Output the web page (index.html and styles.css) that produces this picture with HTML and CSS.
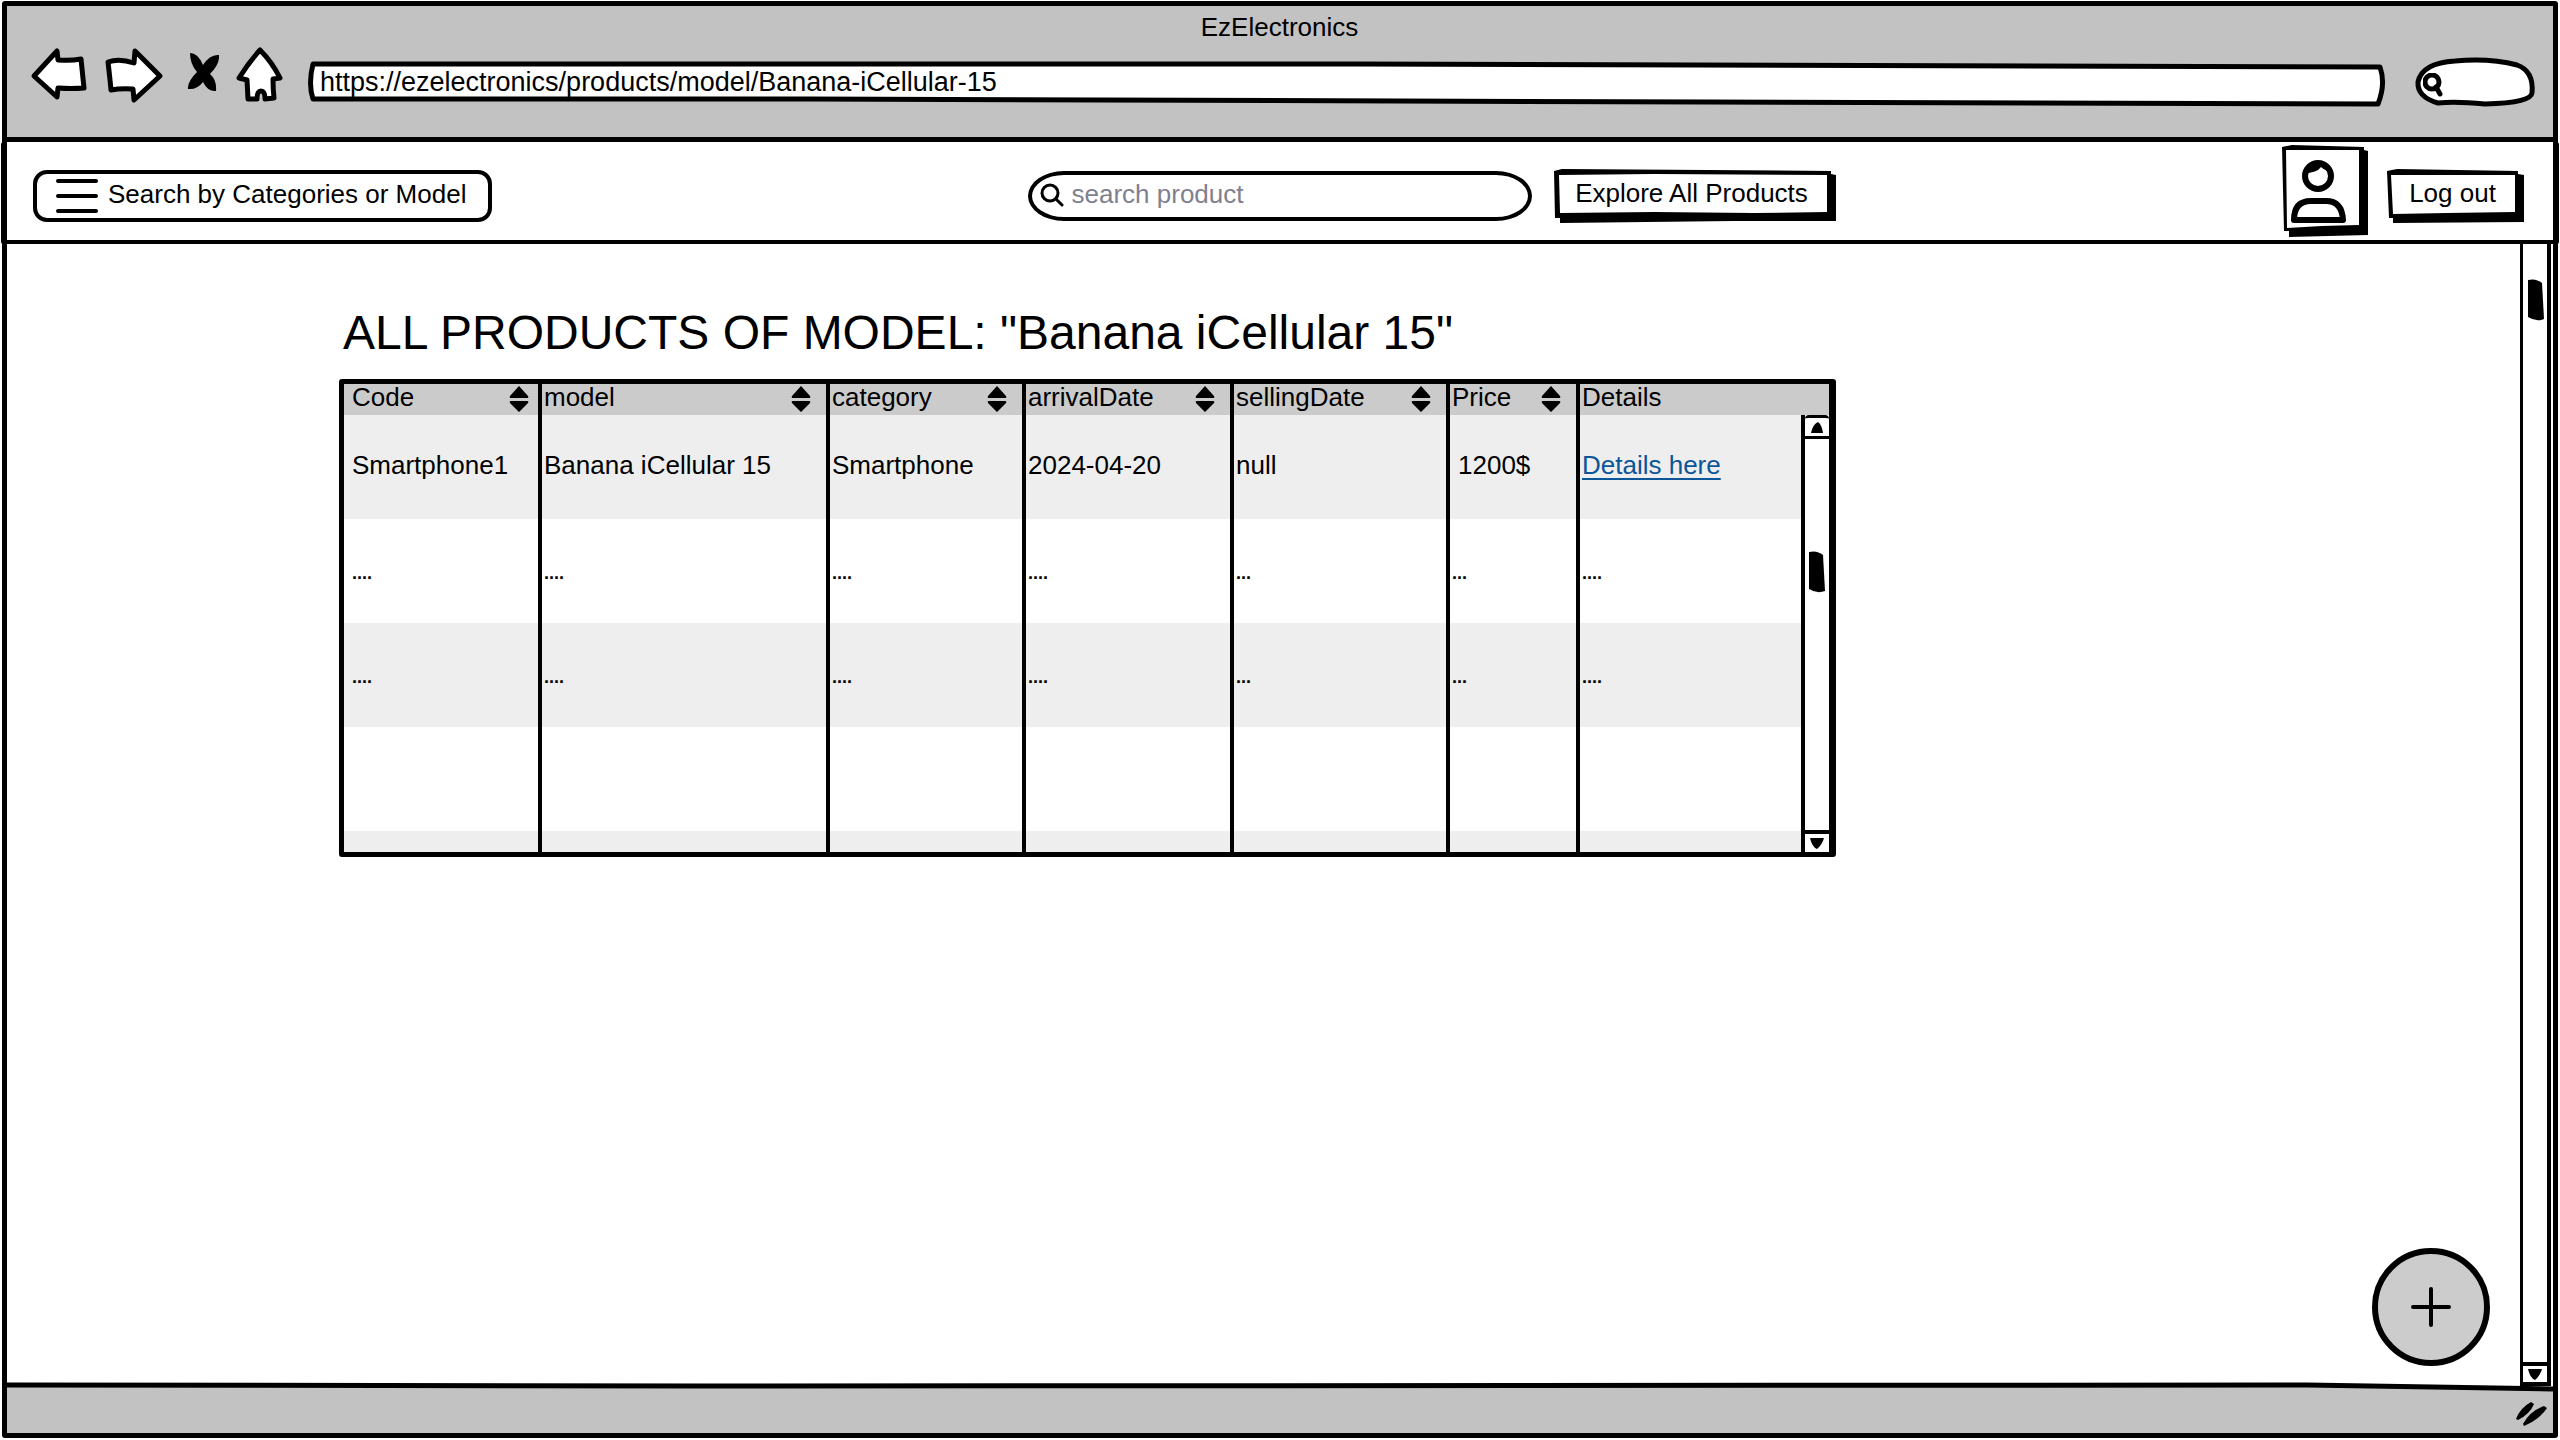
FILE: index.html
```html
<!DOCTYPE html>
<html lang="en">
<head>
<meta charset="utf-8">
<title>EzElectronics</title>
<link rel="stylesheet" href="styles.css">
</head>
<body>
<svg class="defs" aria-hidden="true">
  <symbol id="sort" viewBox="0 0 20 26">
    <path d="M10 0 19 10Q20 12 18 12H2Q0 12 1 10ZM10 26 19 17Q20 15 18 15H2Q0 15 1 17Z"/>
  </symbol>
  <symbol id="down" viewBox="0 0 14 11"><path d="M0 0H14Q12 7 7 11Q2 9 0 0Z"/></symbol>
  <symbol id="up" viewBox="0 0 14 11"><path d="M1 11Q3 2 8 0Q12 3 13 11Z"/></symbol>
  <symbol id="thumb" viewBox="0 0 16 42"><path d="M0 1Q8-1 14 4L16 40Q8 43 0 38Z"/></symbol>
</svg>

<div class="window">
  <header class="chrome">
    <div class="chrome-title">EzElectronics</div>
    <div class="toolbar">
      <button class="tool" aria-label="Back">
        <svg width="60" height="60" viewBox="0 0 60 60"><path class="outline" d="M5 29 28 4 29 13Q42 14 52 12L55 41Q42 42 29 41L28 50Z"/></svg>
      </button>
      <button class="tool" aria-label="Forward">
        <svg width="60" height="60" viewBox="0 0 60 60"><path class="outline" d="M4 15Q15 11 30 16L31 4 56 29 30 53 29 42Q17 41 7 43Q6 32 4 15Z"/></svg>
      </button>
      <button class="tool" aria-label="Stop">
        <svg width="40" height="60" viewBox="0 0 40 60"><path d="M11 6Q19 6 24 18Q31 7 40 8Q41 17 31 27Q38 33 37 44Q29 45 24 35Q18 43 9 42Q8 35 18 25Q11 17 11 6Z"/></svg>
      </button>
      <button class="tool" aria-label="Home">
        <svg width="59" height="60" viewBox="0 0 59 60"><path class="outline" d="M26 3Q38 15 46 31L39 32Q39 42 40 51L31 52Q31 44 27 44Q23 44 23 52L14 52 13 33 5 31Q15 15 26 3Z"/></svg>
      </button>
      <div class="address">
        <svg class="sketch" viewBox="0 0 2077 40" preserveAspectRatio="none" aria-hidden="true"><path d="M5 2 1050 2 2072 5Q2078 22 2070 42L1400 40 500 37 5 37Q0 22 5 2Z"/></svg>
        <input class="field" aria-label="Address" value="https://ezelectronics/products/model/Banana-iCellular-15">
      </div>
      <div class="mini-search">
        <svg class="sketch" viewBox="0 0 119 50" preserveAspectRatio="none" aria-hidden="true"><path d="M23 46Q2 40 3 25Q7 6 40 4Q75 1 102 8Q119 14 117 36Q116 46 70 47Q40 44 23 46Z"/></svg>
        <svg class="mini-lens" viewBox="0 0 20 24" aria-hidden="true"><circle cx="9" cy="9" r="7"/><path d="M13 14 17 21"/></svg>
        <input class="field" aria-label="Web search">
      </div>
    </div>
  </header>

  <nav class="navbar">
    <div class="nav-start">
      <button class="categories">
        <svg width="42" height="34" viewBox="0 0 42 34" aria-hidden="true"><path class="line" d="M2 2H40M2 17H40M2 32H40"/></svg>
        Search by Categories or Model
      </button>
    </div>
    <div class="nav-middle">
      <div class="product-search">
        <svg class="lens" viewBox="0 0 24 24" aria-hidden="true"><circle cx="10" cy="10" r="8"/><path d="M16 16 22 22"/></svg>
        <input type="search" aria-label="Search product" placeholder="search product">
      </div>
      <button class="raised explore">
        <svg class="sketch" viewBox="0 0 282 54" preserveAspectRatio="none" aria-hidden="true"><path class="ink" d="M0 2 8 0 277 2V5L282 6V52L180 52 6 54V49H1Z"/><path class="paper" d="M5 6 100 5 273 6V43L200 44 100 43 6 44Z"/></svg>
        <span>Explore All Products</span>
      </button>
    </div>
    <div class="nav-end">
      <button class="avatar" aria-label="Account">
        <svg width="86" height="92" viewBox="0 0 86 92"><path class="ink" d="M0 2 10 0 82 2V5L86 6V90L7 92V86H2Z"/><path class="paper" d="M4 5 77 5V80L40 81 5 83Z"/><circle cx="36" cy="31" r="13" fill="none" stroke="#000" stroke-width="6"/><path class="ink" d="M22 28Q24 16 36 16Q48 17 49 27Q42 25 39 22Q35 28 22 28Z"/><path d="M12 75Q12 56 29 56H44Q60 56 61 75Z" fill="none" stroke="#000" stroke-width="6" stroke-linejoin="round"/></svg>
      </button>
      <button class="raised logout">
        <svg class="sketch" viewBox="0 0 137 54" preserveAspectRatio="none" aria-hidden="true"><path class="ink" d="M0 2 10 0 131 2V5L137 6V53L6 54V49H2Z"/><path class="paper" d="M4 6 128 6V43L60 44 6 45Z"/></svg>
        <span>Log out</span>
      </button>
    </div>
  </nav>

  <main class="page">
    <section class="content">
      <h1>ALL PRODUCTS OF MODEL: "Banana iCellular 15"</h1>
      <div class="grid">
        <table>
          <colgroup><col class="c-code"><col class="c-model"><col class="c-category"><col class="c-arrival"><col class="c-selling"><col class="c-price"><col></colgroup>
          <thead>
            <tr>
              <th scope="col"><button class="sort">Code<svg><use href="#sort"/></svg></button></th>
              <th scope="col"><button class="sort">model<svg><use href="#sort"/></svg></button></th>
              <th scope="col"><button class="sort">category<svg><use href="#sort"/></svg></button></th>
              <th scope="col"><button class="sort">arrivalDate<svg><use href="#sort"/></svg></button></th>
              <th scope="col"><button class="sort">sellingDate<svg><use href="#sort"/></svg></button></th>
              <th scope="col"><button class="sort">Price<svg><use href="#sort"/></svg></button></th>
              <th scope="col">Details</th>
            </tr>
          </thead>
          <tbody>
            <tr><td>Smartphone1</td><td>Banana iCellular 15</td><td>Smartphone</td><td>2024-04-20</td><td>null</td><td class="amount">1200$</td><td><a href="#details">Details here</a></td></tr>
            <tr class="more"><td>....</td><td>....</td><td>....</td><td>....</td><td>...</td><td>...</td><td>....</td></tr>
            <tr class="more"><td>....</td><td>....</td><td>....</td><td>....</td><td>...</td><td>...</td><td>....</td></tr>
            <tr><td></td><td></td><td></td><td></td><td></td><td></td><td></td></tr>
            <tr class="partial"><td></td><td></td><td></td><td></td><td></td><td></td><td></td></tr>
          </tbody>
        </table>
        <div class="grid-scroll">
          <button class="step step-up" aria-label="Scroll up"><svg><use href="#up"/></svg></button>
          <svg class="thumb"><use href="#thumb"/></svg>
          <button class="step step-down" aria-label="Scroll down"><svg><use href="#down"/></svg></button>
        </div>
      </div>
    </section>
    <div class="page-scroll">
      <svg class="thumb"><use href="#thumb"/></svg>
      <button class="step step-down" aria-label="Scroll page down"><svg><use href="#down"/></svg></button>
    </div>
    <button class="fab" aria-label="Add product">
      <svg width="40" height="40" viewBox="0 0 40 40"><path class="line" d="M20 2V38M2 20H38"/></svg>
    </button>
  </main>

  <footer class="statusbar">
    <svg class="edge" viewBox="0 0 2546 12" preserveAspectRatio="none" aria-hidden="true"><path class="paper" d="M0 0H2546V6L2300 2 0 2Z"/><path class="rule" d="M0 2 700 3 2300 2 2546 6"/></svg>
    <svg class="grip" viewBox="0 0 32 26" aria-hidden="true"><path d="M0 18Q4 7 15 1L18 3Q14 13 2 19ZM7 23Q14 10 28 5L31 7Q24 18 8 25Z"/></svg>
  </footer>
</div>
</body>
</html>
```
FILE: styles.css
```css
*, *::before, *::after { box-sizing: border-box; }

body {
  margin: 0;
  background: #fff;
  color: #000;
  font: 26px/30px "Liberation Sans", Arial, sans-serif;
}

button, input {
  margin: 0;
  padding: 0;
  border: 0;
  background: none;
  color: inherit;
  font: inherit;
}

button { cursor: pointer; }
svg { display: block; }
.defs { position: absolute; width: 0; height: 0; }

.ink { fill: #000; }
.paper { fill: #fff; }
.line { fill: none; stroke: #000; stroke-width: 4; stroke-linecap: round; }
.outline { fill: #fff; stroke: #000; stroke-width: 5; stroke-linejoin: round; }

/* Hand-drawn frame that stretches behind a control */
.sketch {
  position: absolute;
  inset: 0;
  width: 100%;
  height: 100%;
  overflow: visible;
}

.window {
  display: flex;
  flex-direction: column;
  min-height: calc(100vh - 3px);
  margin: 1px 2px 2px;
  border: 5px solid #000;
  border-radius: 3px;
}

/* Browser chrome */
.chrome {
  padding: 6px 19px 30px 22px;
  background: #c2c2c2;
  border-bottom: 5px solid #000;
}
.chrome-title { margin-bottom: 4px; padding-right: 4px; text-align: center; }
.toolbar { display: flex; gap: 15px; }
.tool { flex: none; }
.address {
  position: relative;
  flex: 1;
  align-self: flex-end;
  height: 40px;
  margin-bottom: 5px;
}
.address .sketch path,
.mini-search .sketch path {
  fill: #fff;
  stroke: #000;
  stroke-width: 5;
  stroke-linejoin: round;
}
.field {
  position: relative;
  width: 100%;
  height: 100%;
  padding: 0 12px;
  outline: 0;
  font-size: 27px;
}
.mini-search {
  position: relative;
  width: 119px;
  height: 50px;
  margin: 11px 0 0 15px;
}
.mini-search .field { padding-left: 34px; }
.mini-lens { position: absolute; left: 8px; top: 16px; width: 20px; height: 24px; }
.mini-lens * { fill: none; stroke: #000; stroke-width: 5; stroke-linecap: round; }

/* Site navigation */
.navbar {
  position: relative;
  display: grid;
  grid-template-columns: 13fr auto 9fr;
  align-items: center;
  height: 102px;
  padding: 0 29px 0 26px;
  border-bottom: 4px solid #000;
}
.navbar::before, .navbar::after {
  content: "";
  position: absolute;
  top: 0;
  bottom: -4px;
  width: 5px;
  background: #000;
  border-radius: 3px;
}
.navbar::before { left: -6px; }
.navbar::after { right: -6px; }
.nav-middle, .nav-end { display: flex; align-items: center; }
.nav-middle { gap: 22px; }
.nav-end { gap: 19px; justify-content: flex-end; }

.categories, .product-search, .raised { height: 54px; margin-top: 10px; }
.categories {
  display: flex;
  align-items: center;
  gap: 10px;
  height: 52px;
  padding: 0 22px 4px 19px;
  border: 4px solid #000;
  border-radius: 14px;
}
.categories svg { margin-top: 3px; }
.product-search { position: relative; width: 504px; padding-top: 2px; }
.product-search input {
  width: 100%;
  height: 50px;
  padding: 0 20px 4px 40px;
  border: 4px solid #000;
  border-radius: 36px / 25px;
  outline: 0;
}
.product-search input::placeholder { color: #808090; opacity: 1; }
.lens { position: absolute; left: 12px; top: 14px; width: 24px; height: 24px; }
.lens * { fill: none; stroke: #000; stroke-width: 3; stroke-linecap: round; }
.raised { position: relative; padding-bottom: 6px; }
.raised span { position: relative; }
.explore { width: 282px; padding-right: 6px; }
.logout { width: 137px; padding-right: 6px; }

/* Page body */
.page { position: relative; z-index: 1; display: flex; flex: 1; padding-right: 2px; }
.content { flex: 1; padding: 61px 40px 0 332px; }
h1 { margin: 0 0 18px 4px; font-size: 48px; line-height: 56px; font-weight: 400; }

.grid {
  position: relative;
  max-width: 1497px;
  border: 5px solid #000;
  border-right-width: 7px;
  border-radius: 3px;
}
table { width: 100%; table-layout: fixed; border-collapse: separate; border-spacing: 0; }
.c-code { width: 198px; }
.c-model { width: 288px; }
.c-category { width: 196px; }
.c-arrival { width: 208px; }
.c-selling { width: 216px; }
.c-price { width: 130px; }

th, td {
  padding: 0 0 0 2px;
  border-right: 4px solid #000;
  text-align: left;
  font-weight: 400;
  white-space: nowrap;
}
th:last-child, td:last-child { border-right: 0; }
th:first-child, td:first-child { padding-left: 8px; }
th { height: 31px; background: #cbcbcb; line-height: 26px; vertical-align: top; }
td { height: 104px; padding-bottom: 4px; }
tbody tr:nth-child(odd) { background: #eee; }
.more td { padding-top: 4px; padding-bottom: 0; font-size: 18px; font-weight: 700; }
.partial td { height: 21px; padding-bottom: 0; }
td.amount { padding-left: 8px; }
td a { color: #0b5599; text-underline-offset: 4px; text-decoration-thickness: 2px; }
.sort {
  display: flex;
  justify-content: space-between;
  width: 100%;
  padding-right: 15px;
  line-height: 26px;
}
th:first-child .sort { padding-right: 9px; }
.sort svg { width: 20px; height: 26px; margin-top: 2px; }

/* Scroll bars */
.grid-scroll {
  position: absolute;
  top: 31px;
  right: 0;
  bottom: 0;
  width: 28px;
  background: #fff;
  border-left: 4px solid #000;
}
.thumb { width: 16px; height: 42px; }
.grid-scroll .thumb { position: absolute; left: 4px; top: 136px; }
.page-scroll {
  position: relative;
  width: 31px;
  margin-bottom: -3px;
  border: solid #000;
  border-width: 0 4px 4px 3px;
}
.page-scroll .thumb { position: absolute; left: 5px; top: 35px; }
.step {
  position: absolute;
  left: 0;
  right: 0;
  height: 22px;
  display: grid;
  place-items: center;
}
.step svg { width: 14px; height: 11px; }
.step-up { top: 0; height: 24px; border: solid #000; border-width: 3px 0; border-radius: 4px 4px 0 0; }
.step-down { bottom: 0; border-top: 4px solid #000; }
.page-scroll .step-down { height: 20px; }

.fab {
  position: absolute;
  right: 63px;
  bottom: 17px;
  width: 118px;
  height: 118px;
  display: grid;
  place-items: center;
  background: #ccc;
  border: 6px solid #000;
  border-radius: 50%;
}

.statusbar { position: relative; height: 50px; background: #c2c2c2; }
.edge { width: 100%; height: 12px; overflow: visible; }
.rule { fill: none; stroke: #000; stroke-width: 5; }
.grip { position: absolute; right: 5px; bottom: 6px; width: 32px; height: 26px; }
```
